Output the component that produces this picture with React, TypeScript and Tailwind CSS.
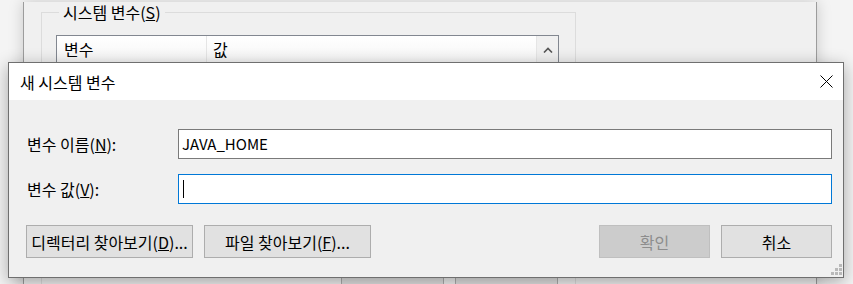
const FONT = "font-['Noto_Sans_CJK_KR','Noto_Sans',sans-serif]"

function Grip() {
  // size grip: 1 / 2 / 3 dots
  const dots = [
    [8, 0],
    [4, 4], [8, 4],
    [0, 8], [4, 8], [8, 8],
  ]
  return (
    <svg width="11" height="11" viewBox="0 0 11 11" className="absolute right-[1px] bottom-[2px]">
      {dots.map(([x, y]) => (
        <rect key={`${x}-${y}`} x={x} y={y} width="3" height="3" fill="#b9b9b9" />
      ))}
    </svg>
  )
}

function CloseIcon() {
  return (
    <svg width="13" height="13" viewBox="0 0 13 13">
      <path d="M0.5 0.5 L12.5 12.5 M12.5 0.5 L0.5 12.5" stroke="#000" strokeWidth="1" fill="none" />
    </svg>
  )
}

function ParentWindow() {
  return (
    <div className="ml-[23px] w-[794px] h-full border-x border-[#9c9c9c] bg-[#f0f0f0] shadow-[0_0_14px_rgba(0,0,0,0.18)]">
      {/* 시스템 변수 group */}
      <fieldset className="mt-[2px] ml-[17px] w-[535px] h-[300px] border border-[#dcdcdc] px-[14px]">
        <legend className="ml-[3px] px-[4px] text-[16px] leading-[20px] text-black">
          시스템 변수(<u>S</u>)
        </legend>
        <div className="mt-[13px] w-[503px] h-[232px] border border-[#828790] bg-white">
          <div className="flex h-[27px] bg-gradient-to-b from-white to-[#f5f5f5] text-[16px] leading-[27px]">
            <div className="w-[150px] pl-[7px] border-r border-[#e5e5e5]">변수</div>
            <div className="flex-1 pl-[6px] border-r border-[#e5e5e5]">값</div>
            <div className="w-[21px] flex items-center justify-center bg-[#f0f0f0]">
              <svg width="10" height="6" viewBox="0 0 10 6">
                <path d="M1 5.5 L5 1.5 L9 5.5" fill="none" stroke="#555" strokeWidth="1.6" />
              </svg>
            </div>
          </div>
        </div>
        <div className="flex gap-[11px] ml-[285px] mt-[6px]">
          <div className="w-[103px] h-[26px] border border-[#adadad] bg-[#e1e1e1]" />
          <div className="w-[103px] h-[26px] border border-[#adadad] bg-[#e1e1e1]" />
        </div>
      </fieldset>
    </div>
  )
}

function Dialog() {
  return (
    <div className="absolute left-[8px] top-[62px] w-[836px] h-[216px] flex flex-col border border-[#6f6f6f] bg-[#f0f0f0] shadow-[0_4px_16px_rgba(0,0,0,0.32)]">
      {/* title bar */}
      <div className="h-[37px] flex items-center justify-between bg-white pl-[11px] pr-[10px]">
        <span className="text-[16px] leading-[20px] text-black">새 시스템 변수</span>
        <CloseIcon />
      </div>

      {/* body */}
      <div className="relative flex-1 flex flex-col pt-[29px] pl-[17px] pr-[11px] text-[16px] leading-[20px]">
        <div className="flex items-center h-[30px]">
          <label className="w-[152px] pl-[1px]">
            변수 이름(<u>N</u>):
          </label>
          <div className="flex-1 h-[30px] border border-[#7a7a7a] bg-white flex items-center pl-[3px] text-[15px]">
            JAVA_HOME
          </div>
        </div>

        <div className="flex items-center h-[30px] mt-[15px]">
          <label className="w-[152px] pl-[1px]">
            변수 값(<u>V</u>):
          </label>
          <div className="flex-1 h-[30px] border border-[#0078d7] bg-white flex items-center pl-[4px]">
            <span className="w-[1px] h-[18px] bg-black" />
          </div>
        </div>

        <div className="flex items-center mt-[21px]">
          <button className="w-[167px] h-[33px] border border-[#adadad] bg-[#e1e1e1] text-black">
            디렉터리 찾아보기(<u>D</u>)...
          </button>
          <button className="ml-[11px] w-[167px] h-[33px] border border-[#adadad] bg-[#e1e1e1] text-black">
            파일 찾아보기(<u>F</u>)...
          </button>
          <div className="flex-1" />
          <button className="w-[111px] h-[33px] border border-[#bfbfbf] bg-[#cccccc] text-[#8d8d8d]">
            확인
          </button>
          <button className="ml-[11px] w-[111px] h-[33px] border border-[#adadad] bg-[#e1e1e1] text-black">
            취소
          </button>
        </div>

        <Grip />
      </div>
    </div>
  )
}

export default function App() {
  return (
    <div className={`relative w-[853px] h-[284px] overflow-hidden bg-[#f4f4f4] text-black ${FONT}`}>
      <ParentWindow />
      <Dialog />
    </div>
  )
}
